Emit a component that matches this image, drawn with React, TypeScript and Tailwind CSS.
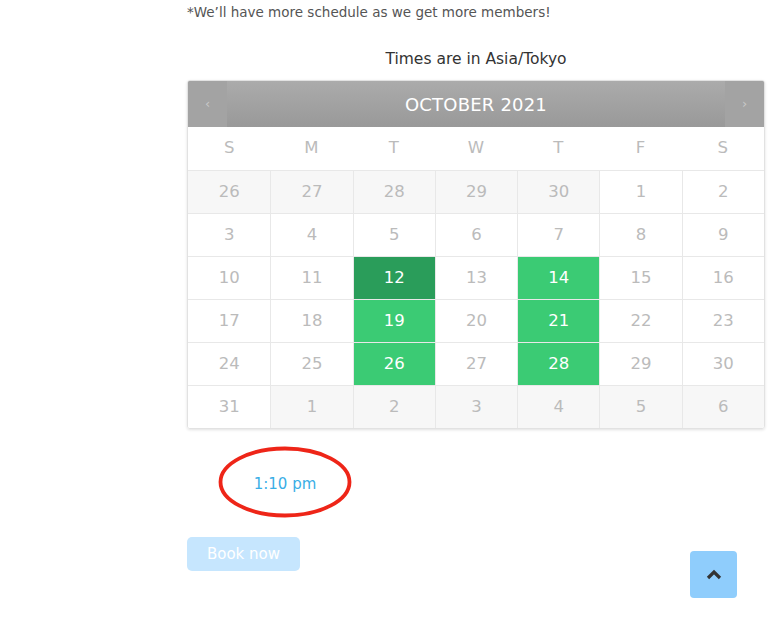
import React from "react";

const font = { fontFamily: '"DejaVu Sans", Verdana, sans-serif' };

type Cell = { d: number; bg: "gray" | "white" | "green" | "dark" };

const rows: Cell[][] = [
  [26, 27, 28, 29, 30].map((d) => ({ d, bg: "gray" as const })).concat([
    { d: 1, bg: "white" },
    { d: 2, bg: "white" },
  ]),
  [3, 4, 5, 6, 7, 8, 9].map((d) => ({ d, bg: "white" as const })),
  [
    { d: 10, bg: "white" },
    { d: 11, bg: "white" },
    { d: 12, bg: "dark" },
    { d: 13, bg: "white" },
    { d: 14, bg: "green" },
    { d: 15, bg: "white" },
    { d: 16, bg: "white" },
  ],
  [
    { d: 17, bg: "white" },
    { d: 18, bg: "white" },
    { d: 19, bg: "green" },
    { d: 20, bg: "white" },
    { d: 21, bg: "green" },
    { d: 22, bg: "white" },
    { d: 23, bg: "white" },
  ],
  [
    { d: 24, bg: "white" },
    { d: 25, bg: "white" },
    { d: 26, bg: "green" },
    { d: 27, bg: "white" },
    { d: 28, bg: "green" },
    { d: 29, bg: "white" },
    { d: 30, bg: "white" },
  ],
  [{ d: 31, bg: "white" as const }].concat(
    [1, 2, 3, 4, 5, 6].map((d) => ({ d, bg: "gray" as const }))
  ),
];

function cellClass(bg: Cell["bg"]) {
  switch (bg) {
    case "gray":
      return "bg-[#f7f7f7] text-[#bbbbbb]";
    case "white":
      return "bg-white text-[#bbbbbb]";
    case "green":
      return "bg-[#3bcb74] text-white";
    case "dark":
      return "bg-[#2a9d5a] text-white";
  }
}

export default function App() {
  return (
    <div className="relative h-[623px] w-[780px] overflow-hidden bg-white text-[#444]" style={font}>
      <div className="ml-[187px] w-[578px]">
        <p className="pt-[2px] text-[13.5px] leading-[20px] text-[#555]">
          *We’ll have more schedule as we get more members!
        </p>
        <p className="mt-[27px] text-center text-[15.5px] leading-[20px] text-[#333]">
          Times are in Asia/Tokyo
        </p>
        <div className="mt-[11px] overflow-hidden rounded-[3px] border border-[#e2e2e2] shadow-[0_1px_3px_rgba(0,0,0,0.12)]">
          <div className="flex h-[46px] bg-gradient-to-b from-[#ababab] to-[#999999]">
            <div className="flex w-[39px] items-center justify-center bg-[#a3a3a3] text-[13px] text-[#c8c8c8]">
              ‹
            </div>
            <div className="flex flex-1 items-center justify-center text-[18px] tracking-[0.2px] text-white">
              OCTOBER 2021
            </div>
            <div className="flex w-[39px] items-center justify-center bg-[#a3a3a3] text-[13px] text-[#c8c8c8]">
              ›
            </div>
          </div>
          <div className="grid h-[43px] grid-cols-7 bg-white">
            {["S", "M", "T", "W", "T", "F", "S"].map((n, i) => (
              <div key={i} className="flex items-center justify-center text-[16.5px] text-[#bbbbbb]">
                {n}
              </div>
            ))}
          </div>
          {rows.map((r, ri) => (
            <div key={ri} className="grid h-[43px] grid-cols-7 border-t border-[#e8e8e8]">
              {r.map((c, ci) => (
                <div
                  key={ci}
                  className={`flex items-center justify-center text-[16.5px] ${
                    ci > 0 ? "border-l border-[#e8e8e8]" : ""
                  } ${cellClass(c.bg)}`}
                >
                  {c.d}
                </div>
              ))}
            </div>
          ))}
        </div>

        <div className="relative ml-[31px] mt-[17px] flex h-[72px] w-[134px] items-center justify-center">
          <span className="mt-[4px] text-[15px] text-[#3aaee6]">1:10 pm</span>
          <svg className="absolute inset-0" width="134" height="72" viewBox="0 0 134 72">
            <ellipse cx="67" cy="36" rx="64.5" ry="33.5" fill="none" stroke="#ee2518" strokeWidth="3.8" />
          </svg>
        </div>

        <button className="mt-[19px] h-[34px] w-[113px] rounded-[5px] bg-[#c6e6fe] text-[15px] text-white">
          Book now
        </button>
      </div>

      <div className="absolute left-[690px] top-[551px] flex h-[47px] w-[47px] items-center justify-center rounded-[4px] bg-[#8fcdfc]">
        <svg width="16" height="11" viewBox="0 0 16 11">
          <path d="M2 9 L8 3 L14 9" fill="none" stroke="#333" strokeWidth="3.2" />
        </svg>
      </div>
    </div>
  );
}
